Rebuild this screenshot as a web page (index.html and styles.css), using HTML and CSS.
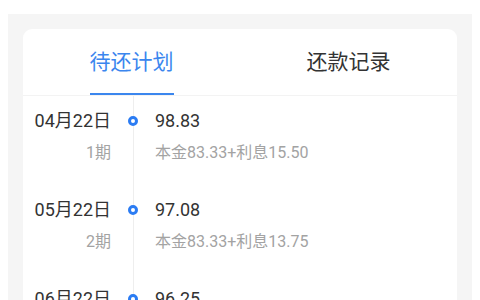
FILE: index.html
```html
<!DOCTYPE html>
<html lang="zh-CN">
<head>
    <meta charset="UTF-8">
    <meta name="viewport" content="width=device-width, initial-scale=1.0">
    <title>还款计划</title>
    <link rel="stylesheet" href="styles.css">
</head>
<body>
    <div class="pagina">
        <div class="painel">
            <section class="cartao">
                <nav class="abas">
                    <div class="aba ativa"><span>待还计划</span></div>
                    <div class="aba"><span>还款记录</span></div>
                </nav>

                <ul class="linha-tempo">
                    <li class="item">
                        <div class="data">
                            <div class="dia">04月22日</div>
                            <div class="periodo">1期</div>
                        </div>
                        <div class="marco"><i class="ponto"></i></div>
                        <div class="valores">
                            <div class="total">98.83</div>
                            <div class="detalhe">本金83.33+利息15.50</div>
                        </div>
                    </li>
                    <li class="item">
                        <div class="data">
                            <div class="dia">05月22日</div>
                            <div class="periodo">2期</div>
                        </div>
                        <div class="marco"><i class="ponto"></i></div>
                        <div class="valores">
                            <div class="total">97.08</div>
                            <div class="detalhe">本金83.33+利息13.75</div>
                        </div>
                    </li>
                    <li class="item">
                        <div class="data">
                            <div class="dia">06月22日</div>
                            <div class="periodo">3期</div>
                        </div>
                        <div class="marco"><i class="ponto"></i></div>
                        <div class="valores">
                            <div class="total">96.25</div>
                            <div class="detalhe">本金83.33+利息12.92</div>
                        </div>
                    </li>
                </ul>
            </section>
        </div>
    </div>
</body>
</html>
```

FILE: styles.css
```css
:root {
    --azul: #3b86ee;
    --azul-ponto: #2b7cf3;
    --texto: #333333;
    --texto-fraco: #a3a3a3;
    --fundo-painel: #f5f5f5;
    --linha: #eeeeee;
}
* { box-sizing: border-box; margin: 0; padding: 0; }
html, body { height: 100%; overflow: hidden; }
body {
    font-family: Roboto, "Noto Sans CJK SC", sans-serif;
    background: #ffffff;
    color: var(--texto);
}
.pagina { height: 100%; padding: 14px 8px 0; }
.painel { height: 100%; background: var(--fundo-painel); padding: 15px 15px 0; }
.cartao { height: 100%; background: #ffffff; border-radius: 9px 9px 0 0; }

.abas { display: flex; height: 67px; border-bottom: 1px solid #f3f3f3; }
.aba {
    flex: 1; display: flex; justify-content: center;
    font-size: 21px; line-height: 28px; color: var(--texto);
}
.aba span { display: block; padding-top: 19px; height: 66px; }
.aba.ativa span { color: var(--azul); border-bottom: 2px solid var(--azul); }

.linha-tempo { list-style: none; }
.item { display: flex; height: 89px; }
.data { width: 88px; text-align: right; padding-top: 13px; }
.dia { font-size: 18px; line-height: 24px; color: var(--texto); }
.periodo { margin-top: 10px; font-size: 16px; line-height: 20px; color: var(--texto-fraco); }
.marco {
    width: 44px; display: flex; justify-content: center;
    background: linear-gradient(var(--linha), var(--linha)) center / 1px 100% no-repeat;
}
.ponto {
    display: block; width: 10px; height: 10px; margin-top: 20px;
    border: 3px solid var(--azul-ponto); border-radius: 50%; background: #ffffff;
}
.valores { padding-top: 13px; }
.total { font-size: 18px; line-height: 24px; color: var(--texto); }
.detalhe { margin-top: 10px; font-size: 16px; line-height: 20px; color: var(--texto-fraco); }
```
